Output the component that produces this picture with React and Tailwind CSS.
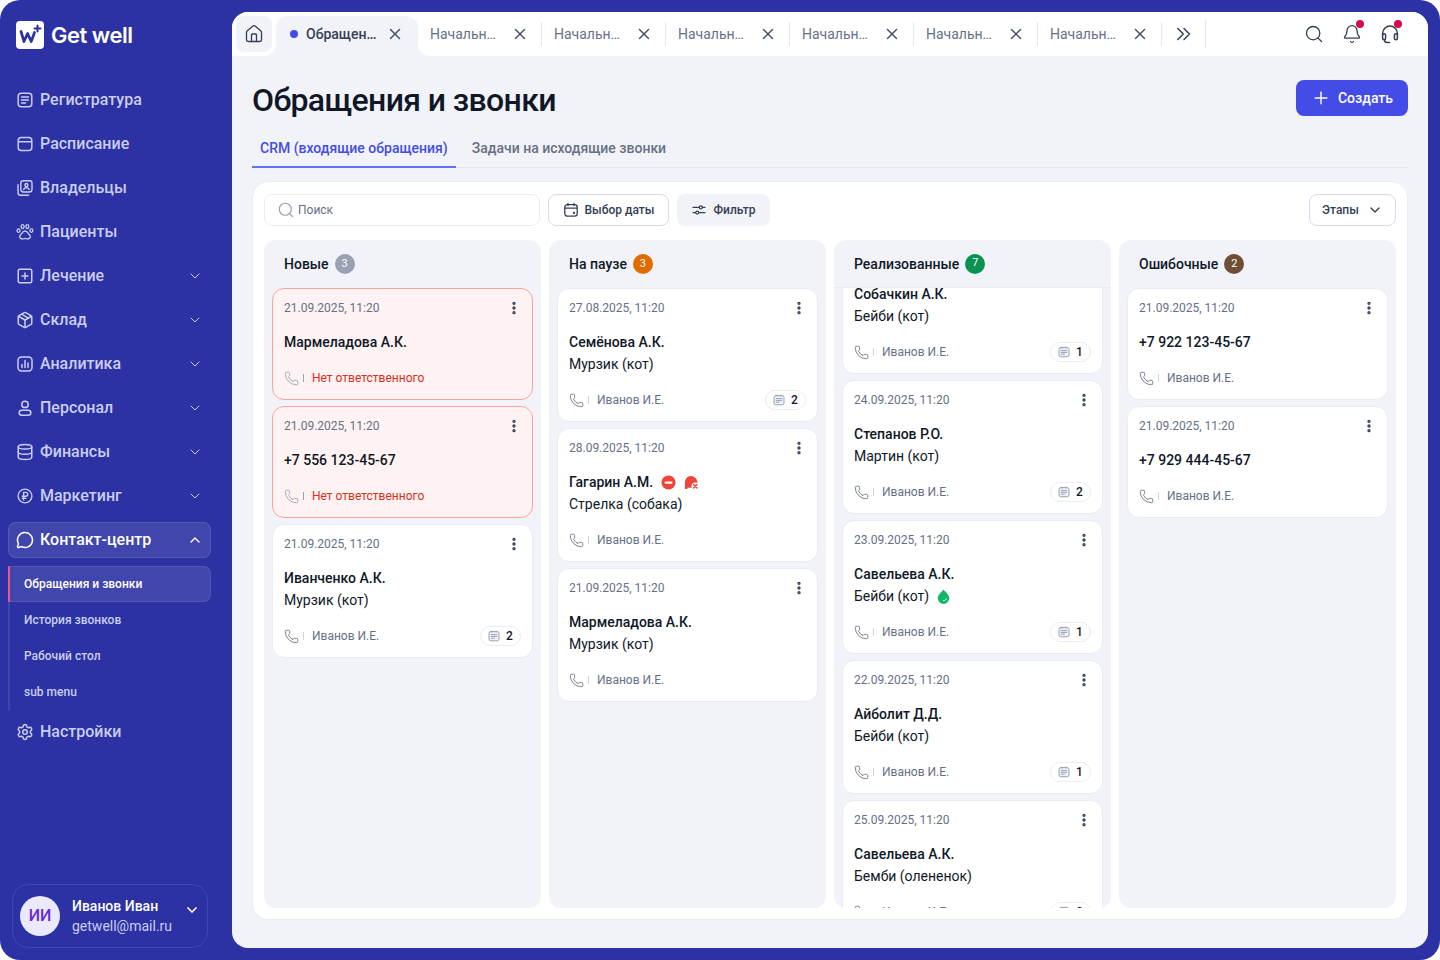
import React from 'react';
import {
  House, X, Search, Bell, Plus, Phone, EllipsisVertical,
  ChevronDown, ChevronUp, SquarePlus, Package, Database, MessageCircle, Settings,
} from 'lucide-react';

const IconDoc = (props) => (
  <svg viewBox="0 0 18 18" {...props} fill="none" stroke="currentColor" strokeWidth="1.5" strokeLinecap="round">
    <rect x="2.2" y="2.2" width="13.6" height="13.6" rx="3" />
    <path d="M5.5 6h7M5.5 9h7M5.5 12h4" />
  </svg>
);
const IconCalendarBox = (props) => (
  <svg viewBox="0 0 18 18" {...props} fill="none" stroke="currentColor" strokeWidth="1.5">
    <rect x="2.2" y="2.6" width="13.6" height="13" rx="3" />
    <path d="M2.2 6.8h13.6" />
  </svg>
);
const IconOwners = (props) => (
  <svg viewBox="0 0 18 18" {...props} fill="none" stroke="currentColor" strokeWidth="1.4" strokeLinecap="round">
    <rect x="4.8" y="1.8" width="11.2" height="11.2" rx="2.4" />
    <circle cx="10.4" cy="6" r="1.5" />
    <path d="M7.6 10.6c.5-1.3 1.5-1.8 2.8-1.8s2.3.5 2.8 1.8" />
    <path d="M2 5.6v8.2a2.4 2.4 0 0 0 2.4 2.4h8.2" />
  </svg>
);
const IconPaw = (props) => (
  <svg viewBox="0 0 18 18" {...props} fill="none" stroke="currentColor" strokeWidth="1.3" strokeLinejoin="round">
    <ellipse cx="6.6" cy="3.6" rx="1.5" ry="1.9" />
    <ellipse cx="11.4" cy="3.6" rx="1.5" ry="1.9" />
    <ellipse cx="2.6" cy="7.6" rx="1.5" ry="1.8" />
    <ellipse cx="15.4" cy="7.6" rx="1.5" ry="1.8" />
    <path d="M9 8c-1.7 0-2.6 1.3-3.4 2.6-.7 1-1.9 1.6-1.9 3 0 1.5 1.2 2.4 2.6 2.4 1 0 1.7-.5 2.7-.5s1.7.5 2.7.5c1.4 0 2.6-.9 2.6-2.4 0-1.4-1.2-2-1.9-3C11.6 9.3 10.7 8 9 8z" />
  </svg>
);
const IconChartBox = (props) => (
  <svg viewBox="0 0 18 18" {...props} fill="none" stroke="currentColor" strokeWidth="1.5" strokeLinecap="round">
    <rect x="2" y="2" width="14" height="14" rx="3.4" />
    <path d="M6 12.5V9.5M9 12.5V5.5M12 12.5V8" />
  </svg>
);
const IconPerson = (props) => (
  <svg viewBox="0 0 18 18" {...props} fill="none" stroke="currentColor" strokeWidth="1.5">
    <circle cx="9" cy="5.4" r="3.2" />
    <rect x="3.2" y="11.2" width="11.6" height="5" rx="2.5" />
  </svg>
);
const IconRuble = (props) => (
  <svg viewBox="0 0 18 18" {...props} fill="none" stroke="currentColor" strokeWidth="1.4" strokeLinecap="round" strokeLinejoin="round">
    <circle cx="9" cy="9" r="6.9" />
    <path d="M7.6 13V5.4h2.2a1.9 1.9 0 0 1 0 3.9H6.3M6.3 11.2h3.4" />
  </svg>
);
const IconCalendar = (props) => (
  <svg viewBox="0 0 16 16" {...props} fill="none" stroke="currentColor" strokeWidth="1.3" strokeLinecap="round">
    <rect x="1.8" y="2.6" width="12.4" height="11.6" rx="2.6" />
    <path d="M1.8 6.2h12.4M5 1.4v2.2M11 1.4v2.2" />
    <circle cx="11" cy="11" r=".5" fill="currentColor" />
  </svg>
);
const IconSliders = (props) => (
  <svg viewBox="0 0 16 16" {...props} fill="none" stroke="currentColor" strokeWidth="1.2" strokeLinecap="round">
    <path d="M2 5.4h6.2M11.4 5.4H14M2 10.6h2.6M7.8 10.6H14" />
    <circle cx="9.8" cy="5.4" r="1.5" />
    <circle cx="6.2" cy="10.6" r="1.5" />
  </svg>
);
const IconChevrons = (props) => (
  <svg viewBox="0 0 16 14" {...props} fill="none" stroke="currentColor" strokeWidth="1.5" strokeLinecap="round" strokeLinejoin="round">
    <path d="M1.8 1.5L7.3 7l-5.5 5.5M8 1.5L13.5 7 8 12.5" />
  </svg>
);
const IconHeadset = (props) => (
  <svg viewBox="0 0 20 20" {...props} fill="none" stroke="currentColor" strokeWidth="1.5" strokeLinecap="round">
    <path d="M2.6 11V9.4a7.4 7.4 0 0 1 14.8 0V11" />
    <rect x="2.6" y="9.8" width="3" height="6" rx="1.5" />
    <rect x="14.4" y="9.8" width="3" height="6" rx="1.5" />
    <path d="M4.4 15.8c0 1.9 1.4 2.8 3.2 2.8h2" />
  </svg>
);
const IconNote = (props) => (
  <svg viewBox="0 0 12 12" {...props} fill="none" stroke="currentColor" strokeWidth="1" strokeLinecap="round">
    <rect x="1" y="1.6" width="10" height="9.2" rx="1.8" fill="#f2f3f8" />
    <path d="M3.2 4.6h5.6M3.2 6.4h5.6M3.2 8.2h3.2M4 1v1.2M8 1v1.2" />
  </svg>
);
const IconStop = () => (
  <svg viewBox="0 0 16 16" className="size-[15px]">
    <circle cx="8" cy="8" r="7.5" fill="#f04438" />
    <rect x="3.8" y="6.8" width="8.4" height="2.4" rx="1" fill="#fff" />
  </svg>
);
const IconHeadBan = () => (
  <svg viewBox="0 0 16 16" className="size-[15px]">
    <path d="M1 15V8a6.6 6.6 0 0 1 13.2-.6V15H9v-1.4H3.6V15z" fill="#f04438" />
    <circle cx="12" cy="12" r="4" fill="#fff" />
    <path d="M10.2 10.2l3.6 3.6M13.8 10.2l-3.6 3.6" stroke="#f04438" strokeWidth="1.6" strokeLinecap="round" />
  </svg>
);
const IconDrop = () => (
  <svg viewBox="0 0 14 16" className="h-[15px] w-[13px]">
    <path d="M7 .4C8.6 3 13.2 5.6 13.2 10a6.2 6 0 0 1-12.4 0C.8 5.6 5.4 3 7 .4z" fill="#12b76a" />
    <path d="M7 12.6c1.4 0 2.6-.8 3-2.2" stroke="#fff" strokeWidth="1" fill="none" strokeLinecap="round" />
  </svg>
);

const Logo = () => (
  <div className="flex size-7 items-center justify-center rounded-[4px] bg-white">
    <svg viewBox="0 0 28 28" className="size-7" fill="none" stroke="#2c32a3" strokeLinejoin="round" strokeLinecap="round">
      <path d="M5 10.5l3 10 3.6-8 3.6 8 3.3-9" strokeWidth="2.7" />
      <path d="M21.5 4.5v6M18.5 7.5h6" strokeWidth="2" />
    </svg>
  </div>
);

const nav = [
  { label: 'Регистратура', icon: IconDoc },
  { label: 'Расписание', icon: IconCalendarBox },
  { label: 'Владельцы', icon: IconOwners },
  { label: 'Пациенты', icon: IconPaw },
  { label: 'Лечение', icon: SquarePlus, more: true },
  { label: 'Склад', icon: Package, more: true },
  { label: 'Аналитика', icon: IconChartBox, more: true },
  { label: 'Персонал', icon: IconPerson, more: true },
  { label: 'Финансы', icon: Database, more: true },
  { label: 'Маркетинг', icon: IconRuble, more: true },
];

const submenu = ['Обращения и звонки', 'История звонков', 'Рабочий стол', 'sub menu'];

const NavItem = ({ item }) => {
  const Icon = item.icon;
  return (
    <div className="flex h-9 items-center gap-1.5 border border-transparent px-[7px] text-[#c9cdf2]">
      <Icon className="size-[18px] shrink-0" strokeWidth={2} />
      <span className="text-base font-medium">{item.label}</span>
      {item.more && <ChevronDown className="ml-auto size-4" strokeWidth={1.5} />}
    </div>
  );
};

const Sidebar = () => (
  <aside className="flex w-[232px] shrink-0 flex-col pb-3">
    <div className="ml-4 mt-[21px] flex h-7 items-center gap-[7px]">
      <Logo />
      <span className="font-['Inter'] text-[22px] font-semibold tracking-[-0.5px] text-white">Get well</span>
    </div>
    <nav className="ml-2 mt-[33px] flex w-[203px] flex-col gap-2">
      {nav.map((item) => (
        <NavItem key={item.label} item={item} />
      ))}
      <div className="flex h-9 items-center gap-1.5 rounded-lg border border-white/10 bg-white/10 px-[7px] text-white">
        <MessageCircle className="size-[18px]" strokeWidth={2} />
        <span className="text-base font-medium">Контакт-центр</span>
        <ChevronUp className="ml-auto size-4" strokeWidth={2} />
      </div>
      <div className="-mb-1 flex flex-col border-l-2 border-white/10">
        {submenu.map((label, i) => (
          <div
            key={label}
            className={
              i === 0
                ? '-ml-0.5 flex h-9 items-center rounded-r-lg border border-l-2 border-white/10 border-l-[#f0567f] bg-white/10 pl-3.5 text-xs font-medium text-white'
                : 'flex h-9 items-center pl-3.5 text-xs font-medium text-[#c9cdf2]'
            }
          >
            {label}
          </div>
        ))}
      </div>
      <NavItem item={{ label: 'Настройки', icon: Settings }} />
    </nav>
    <div className="ml-3 mt-auto flex h-[64px] w-[196px] items-center rounded-2xl border border-white/10 pl-[7px] pr-[7px]">
      <div className="flex size-10 items-center justify-center rounded-full bg-[#ebe9fe] text-base font-medium text-[#6927da]">ИИ</div>
      <div className="ml-3 flex flex-col">
        <span className="text-sm font-medium leading-5 text-white">Иванов Иван</span>
        <span className="text-sm leading-5 text-[#c9cdf2]">getwell@mail.ru</span>
      </div>
      <ChevronDown className="mb-3 ml-auto size-4 text-white" strokeWidth={2.5} />
    </div>
  </aside>
);

const Tab = () => (
  <div className="flex h-11 w-[124px] shrink-0 items-center pl-3">
    <span className="w-[68px] truncate text-sm text-[#667085]">Начальная страница</span>
    <X className="ml-3.5 size-[18px] shrink-0 text-[#475467]" strokeWidth={2} />
    <span className="ml-[12px] h-6 w-px bg-[#e4e7ec]" />
  </div>
);

const TopBar = () => (
  <div className="flex h-11 shrink-0">
    <div className="rounded-br-xl bg-white p-1">
      <div className="flex size-9 items-center justify-center rounded-lg bg-[#f2f3f8] text-[#344054]">
        <House className="size-5" strokeWidth={1.6} />
      </div>
    </div>
    <div className="bg-white pt-1">
      <div className="flex h-10 w-[142px] items-center rounded-t-xl bg-[#f2f3f8] pb-1 pl-3.5">
        <span className="size-2 rounded-full bg-[#444ce7]" />
        <span className="ml-2 w-[72px] truncate text-sm font-medium text-[#344054]">Обращения и звонки</span>
        <X className="ml-2 size-[18px] text-[#475467]" strokeWidth={2} />
      </div>
    </div>
    <div className="flex flex-1 items-center rounded-bl-xl bg-white">
      {[1, 2, 3, 4, 5, 6].map((n) => (
        <Tab key={n} />
      ))}
      <IconChevrons className="ml-[14px] h-[14px] w-4 text-[#344054]" />
      <span className="ml-[13px] h-7 w-px bg-[#e4e7ec]" />
      <div className="ml-auto flex items-center gap-[18px] pr-7 text-[#344054]">
        <Search className="size-5" strokeWidth={1.6} />
        <div className="relative">
          <Bell className="size-5" strokeWidth={1.6} />
          <span className="absolute -right-0.5 -top-1 size-2 rounded-full bg-[#d60b4c]" />
        </div>
        <div className="relative">
          <IconHeadset className="size-5" />
          <span className="absolute -right-0.5 -top-1 size-2 rounded-full bg-[#d60b4c]" />
        </div>
      </div>
    </div>
  </div>
);

const Card = ({ date, name, pet, owner, notes, alert, nameBadge, petBadge }) => (
  <div className={`rounded-xl border px-[11px] pb-[11px] pt-2.5 ${alert ? 'border-[#fda29b] bg-[#fef3f2]' : 'border-[#eaecf5] bg-white'}`}>
    <div className="flex h-[18px] items-center justify-between">
      <span className="text-xs text-[#667085]">{date}</span>
      <EllipsisVertical className="-mr-px size-4 text-[#344054]" strokeWidth={3} />
    </div>
    <div className="mt-3.5 flex h-[22px] items-center gap-2 text-sm font-medium text-[#101828]">
      {name}
      {nameBadge}
    </div>
    {pet && (
      <div className="flex h-[22px] items-center gap-2 text-sm text-[#101828]">
        {pet}
        {petBadge}
      </div>
    )}
    <div className="mt-[15px] flex h-5 items-center">
      <Phone className={`size-[15px] ${alert ? 'text-[#98a2b3]' : 'text-[#667085]'}`} strokeWidth={1.4} />
      <span className={`ml-1 h-2 w-px ${alert ? 'bg-[#98a2b3]' : 'bg-[#d0d5dd]'}`} />
      <span className={`ml-2 text-xs ${alert ? 'text-[#d92d20]' : 'text-[#667085]'}`}>
        {alert ? 'Нет ответственного' : owner}
      </span>
      {notes && (
        <span className="ml-auto flex h-5 w-[41px] items-center justify-center gap-1.5 rounded-full border border-[#eaecf5] text-xs font-medium text-[#101828]">
          <IconNote className="size-3 text-[#98a2b3]" />
          {notes}
        </span>
      )}
    </div>
  </div>
);

const owner = 'Иванов И.Е.';

const columns = [
  {
    title: 'Новые',
    count: 3,
    color: 'bg-[#98a2b3]',
    cards: [
      { date: '21.09.2025, 11:20', name: 'Мармеладова А.К.', alert: true },
      { date: '21.09.2025, 11:20', name: '+7 556 123-45-67', alert: true },
      { date: '21.09.2025, 11:20', name: 'Иванченко А.К.', pet: 'Мурзик (кот)', owner, notes: 2 },
    ],
  },
  {
    title: 'На паузе',
    count: 3,
    color: 'bg-[#e06c00]',
    cards: [
      { date: '27.08.2025, 11:20', name: 'Семёнова А.К.', pet: 'Мурзик (кот)', owner, notes: 2 },
      {
        date: '28.09.2025, 11:20',
        name: 'Гагарин А.М.',
        pet: 'Стрелка (собака)',
        owner,
        nameBadge: (
          <span className="flex items-center gap-2">
            <IconStop />
            <IconHeadBan />
          </span>
        ),
      },
      { date: '21.09.2025, 11:20', name: 'Мармеладова А.К.', pet: 'Мурзик (кот)', owner },
    ],
  },
  {
    title: 'Реализованные',
    count: 7,
    color: 'bg-[#099250]',
    scrolled: true,
    cards: [
      { date: '', name: 'Собачкин А.К.', pet: 'Бейби (кот)', owner, notes: 1 },
      { date: '24.09.2025, 11:20', name: 'Степанов Р.О.', pet: 'Мартин (кот)', owner, notes: 2 },
      { date: '23.09.2025, 11:20', name: 'Савельева А.К.', pet: 'Бейби (кот)', owner, notes: 1, petBadge: <IconDrop /> },
      { date: '22.09.2025, 11:20', name: 'Айболит Д.Д.', pet: 'Бейби (кот)', owner, notes: 1 },
      { date: '25.09.2025, 11:20', name: 'Савельева А.К.', pet: 'Бемби (олененок)', owner, notes: 2 },
    ],
  },
  {
    title: 'Ошибочные',
    count: 2,
    color: 'bg-[#6f4e37]',
    cards: [
      { date: '21.09.2025, 11:20', name: '+7 922 123-45-67', owner },
      { date: '21.09.2025, 11:20', name: '+7 929 444-45-67', owner },
    ],
  },
];

const Column = ({ column }) => (
  <div className="flex h-[668px] flex-col overflow-hidden rounded-xl bg-[#f2f3f8]">
    <div className={`flex shrink-0 items-center gap-1.5 pl-5 ${column.scrolled ? 'h-[47px]' : 'h-12'}`}>
      <span className="text-sm font-medium text-[#101828]">{column.title}</span>
      <span className={`flex size-5 items-center justify-center rounded-full text-[11px] text-white ${column.color}`}>{column.count}</span>
    </div>
    <div className={`flex-1 overflow-hidden px-2 ${column.scrolled ? 'border-t border-[#e9ebf3]' : ''}`}>
      <div className={`flex flex-col gap-1.5 ${column.scrolled ? '-mt-12' : ''}`}>
        {column.cards.map((card, i) => (
          <Card key={i} {...card} />
        ))}
      </div>
    </div>
  </div>
);

const Board = () => (
  <div className="mt-[13px] h-[739px] rounded-2xl border border-[#eaecf5] bg-white px-[11px] pt-3">
    <div className="flex h-8 items-center">
      <div className="flex h-8 w-[276px] items-center rounded-lg border border-[#eaecf5] pl-3 text-xs text-[#667085]">
        <Search className="size-[18px] text-[#98a2b3]" strokeWidth={1.5} />
        <span className="ml-[3px]">Поиск</span>
      </div>
      <div className="ml-2 flex h-8 w-[121px] items-center justify-center gap-1.5 rounded-lg border border-[#d5d9eb] text-xs font-medium text-[#344054]">
        <IconCalendar className="size-4" />
        Выбор даты
      </div>
      <div className="ml-2 flex h-8 w-[93px] items-center justify-center gap-1.5 rounded-lg bg-[#f2f3f8] text-xs font-medium text-[#344054]">
        <IconSliders className="size-4" />
        Фильтр
      </div>
      <div className="ml-auto flex h-8 w-[87px] items-center justify-center gap-2 rounded-lg border border-[#d5d9eb] text-xs font-medium text-[#344054]">
        Этапы
        <ChevronDown className="size-4" strokeWidth={2} />
      </div>
    </div>
    <div className="mt-3.5 grid grid-cols-4 gap-2">
      {columns.map((column) => (
        <Column key={column.title} column={column} />
      ))}
    </div>
  </div>
);

export default function App() {
  return (
    <div className="h-[960px] w-[1440px] bg-white font-['Roboto',sans-serif]">
      <div className="flex h-full overflow-hidden rounded-[20px] bg-[#2c32a3]">
        <Sidebar />
        <main className="my-3 mr-3 flex flex-1 flex-col overflow-hidden rounded-2xl bg-[#f2f3f8]">
          <TopBar />
          <div className="flex flex-1 flex-col px-5 pt-6">
            <div className="flex h-9 items-center justify-between">
              <h1 className="translate-y-[2px] text-[32px] font-medium leading-10 tracking-[-0.64px] text-[#101828]">Обращения и звонки</h1>
              <button className="flex h-9 w-[112px] items-center justify-center gap-[7px] rounded-lg bg-[#444ce7] text-sm font-medium text-white">
                <Plus className="size-5" strokeWidth={1.75} />
                Создать
              </button>
            </div>
            <div className="mt-3.5 flex h-[38px] gap-2 border-b border-[#e4e7ec]">
              <div className="-mb-px flex items-center border-b-2 border-[#6172f3] px-2 text-sm font-medium text-[#444ce7]">CRM (входящие обращения)</div>
              <div className="-mb-px flex items-center border-b-2 border-transparent px-2 text-sm font-medium text-[#667085]">Задачи на исходящие звонки</div>
            </div>
            <Board />
          </div>
        </main>
      </div>
    </div>
  );
}
